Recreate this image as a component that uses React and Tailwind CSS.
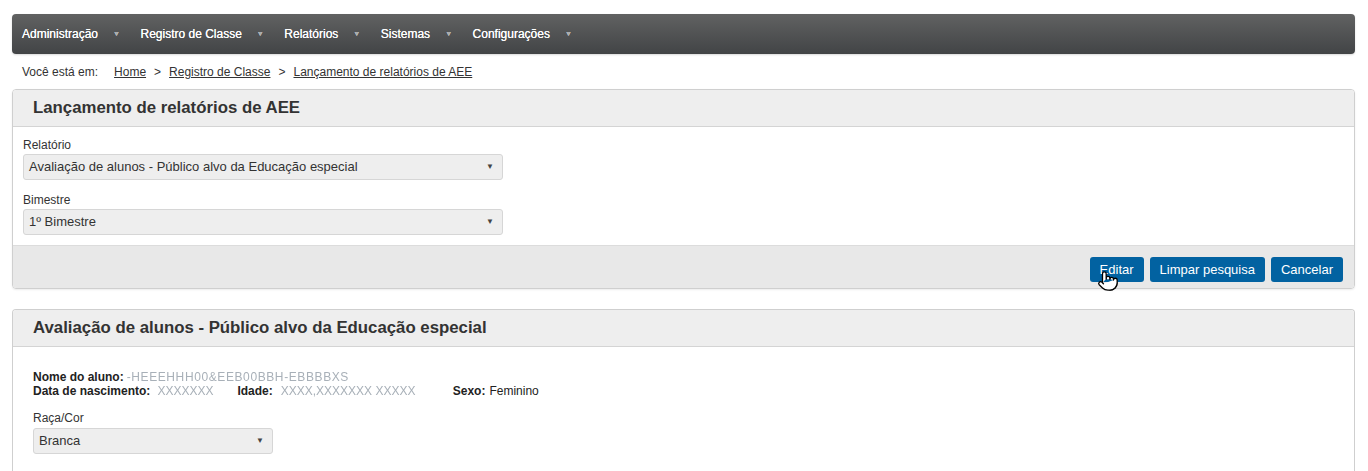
import React from "react";
import { Pointer } from "lucide-react";

const navItems = ["Administração", "Registro de Classe", "Relatórios", "Sistemas", "Configurações"];

function Select({ value, className }) {
  return (
    <div
      className={`flex items-center justify-between h-[26px] rounded-[3px] border border-[#d6d6d6] bg-[#eeeeee] pl-[5px] pr-[8px] text-[13px] text-[#333] ${className}`}
    >
      <span>{value}</span>
      <span className="text-[8px] text-[#444]">▼</span>
    </div>
  );
}

function Blur({ children, w }) {
  return (
    <span className={`inline-block text-[#a8b0b8] blur-[0.6px] whitespace-nowrap align-bottom ${w}`}>
      {children}
    </span>
  );
}

export default function App() {
  return (
    <div className="bg-white min-h-[471px] px-[12px] pr-[13px] pt-[14px] text-[#333]" style={{ fontFamily: '"Liberation Sans", Arial, sans-serif' }}>
      {/* Nav */}
      <div className="flex items-center h-[40px] rounded-[4px] bg-gradient-to-b from-[#616262] to-[#424446] shadow-[0_1px_2px_rgba(0,0,0,0.15)]">
        {navItems.map((item) => (
          <div key={item} className="flex items-center pl-[10px] pr-[10.5px] text-[12px] text-white [text-shadow:0_0_0.4px_#fff]">
            <span>{item}</span>
            <span className="ml-[15px] text-[7px] text-[#a9abad]">▼</span>
          </div>
        ))}
      </div>

      {/* Breadcrumb */}
      <div className="flex items-center h-[35px] pl-[10px] text-[12px] text-[#333]">
        <span>Você está em:</span>
        <span className="ml-[16px] underline">Home</span>
        <span className="mx-[8px]">&gt;</span>
        <span className="underline">Registro de Classe</span>
        <span className="mx-[8px]">&gt;</span>
        <span className="underline">Lançamento de relatórios de AEE</span>
      </div>

      {/* Panel 1 */}
      <div className="rounded-[4px] border border-[#cfcfcf] shadow-[0_1px_2px_rgba(0,0,0,0.08)]">
        <div className="h-[37px] flex items-center pl-[20px] rounded-t-[3px] bg-[#eeeeee] border-b border-[#d4d4d4] text-[16.8px] font-bold text-[#333]">
          Lançamento de relatórios de AEE
        </div>
        <div className="bg-white px-[10px] pt-[10px] pb-[10px]">
          <div className="text-[12px] leading-[16px]">Relatório</div>
          <Select className="mt-[1px] w-[480px]" value="Avaliação de alunos - Público alvo da Educação especial" />
          <div className="mt-[12px] text-[12px] leading-[16px]">Bimestre</div>
          <Select className="mt-[1px] w-[480px]" value="1º Bimestre" />
        </div>
        <div className="h-[43px] flex items-start justify-end gap-[6px] pt-[11px] pr-[11px] rounded-b-[3px] bg-[#e8e8e8] border-t border-[#dcdcdc]">
          <div className="relative">
            <button className="h-[25px] px-[10px] rounded-[3px] bg-[#0262a1] text-white text-[13px]">Editar</button>
            <Pointer className="absolute left-[7px] top-[13px]" size={22} fill="white" stroke="black" strokeWidth={1.4} />
          </div>
          <button className="h-[25px] px-[10px] rounded-[3px] bg-[#0262a1] text-white text-[13px]">Limpar pesquisa</button>
          <button className="h-[25px] px-[10px] rounded-[3px] bg-[#0262a1] text-white text-[13px]">Cancelar</button>
        </div>
      </div>

      {/* Panel 2 */}
      <div className="mt-[20px] rounded-t-[4px] border border-b-0 border-[#cfcfcf] overflow-hidden">
        <div className="h-[37px] flex items-center pl-[20px] bg-[#eeeeee] border-b border-[#d4d4d4] text-[16.8px] font-bold text-[#333]">
          Avaliação de alunos - Público alvo da Educação especial
        </div>
        <div className="bg-white pl-[20px] pt-[23px] pb-[20px]">
          <div className="text-[12px] leading-[14px] text-[#222]">
            <span className="font-bold">Nome do aluno:</span>
            <Blur w="ml-[3px] w-[228px] tracking-[0.6px]">-HEEEHHH00&amp;EEB00BBH-EBBBBXS</Blur>
          </div>
          <div className="text-[12px] leading-[14px] text-[#222] flex">
            <span className="font-bold">Data de nascimento:</span>
            <Blur w="ml-[7px] w-[56px]">XXXXXXX</Blur>
            <span className="font-bold ml-[24px]">Idade:</span>
            <Blur w="ml-[8px] w-[145px]">XXXX,XXXXXXX XXXXX</Blur>
            <span className="font-bold ml-[27px]">Sexo:</span>
            <span className="ml-[4px]">Feminino</span>
          </div>
          <div className="mt-[12px] text-[12px] leading-[16px]">Raça/Cor</div>
          <Select className="mt-[2px] w-[240px]" value="Branca" />
        </div>
      </div>
    </div>
  );
}
